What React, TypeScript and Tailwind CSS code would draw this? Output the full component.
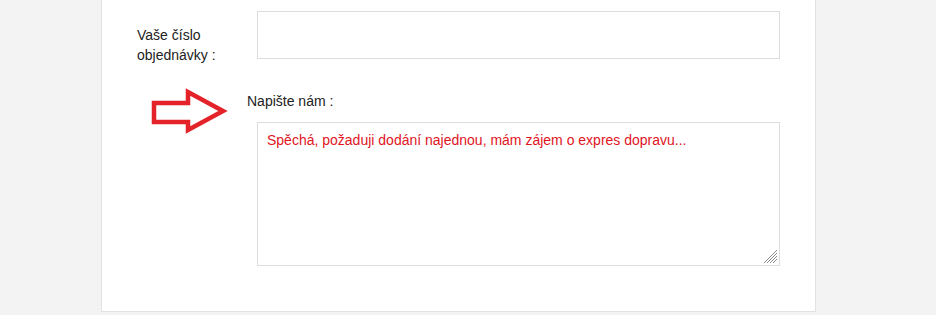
import React from "react";

export default function App() {
  return (
    <div className="w-[936px] h-[315px] bg-[#f3f3f3] overflow-hidden" style={{ fontFamily: '"Liberation Sans", Arial, sans-serif' }}>
      <div className="ml-[101px] w-[715px] h-[312px] bg-white border-x border-b border-[#e2e2e2] flex flex-col">
        <div className="flex items-start pt-[11px] h-[59px]">
          <div className="w-[155px] pl-[35px] mt-[14px] text-[14px] leading-[20px] text-[#222]">
            Vaše číslo
            <br />
            objednávky :
          </div>
          <div className="w-[523px] h-[48px] border border-[#dddddd] bg-white" />
        </div>
        <div className="flex mt-[32px]">
          <div className="w-[145px] shrink-0">
            <svg width="80" height="48" viewBox="0 0 80 48" className="ml-[48px] -mt-[3px] block">
              <polygon
                points="4,15 38,15 38,4 73,23 38,42 38,34 4,34"
                fill="none"
                stroke="#e3222a"
                strokeWidth="4.5"
                strokeLinejoin="miter"
              />
            </svg>
          </div>
          <div className="flex flex-col">
            <div className="text-[14px] leading-[20px] text-[#222]">Napište nám :</div>
            <div className="relative ml-[10px] mt-[11px] w-[523px] h-[144px] border border-[#dddddd] bg-white pl-[9px] pt-[7px] text-[14px] leading-[20px] text-[#e0141e]">
              Spěchá, požaduji dodání najednou, mám zájem o expres dopravu...
              <svg width="13" height="13" viewBox="0 0 13 13" className="absolute right-[2px] bottom-[2px]">
                <g stroke="#8a8a8a" strokeWidth="1">
                  <line x1="13" y1="0" x2="0" y2="13" />
                  <line x1="13" y1="3" x2="3" y2="13" />
                  <line x1="13" y1="6" x2="6" y2="13" />
                  <line x1="13" y1="9" x2="9" y2="13" />
                </g>
              </svg>
            </div>
          </div>
        </div>
      </div>
    </div>
  );
}
